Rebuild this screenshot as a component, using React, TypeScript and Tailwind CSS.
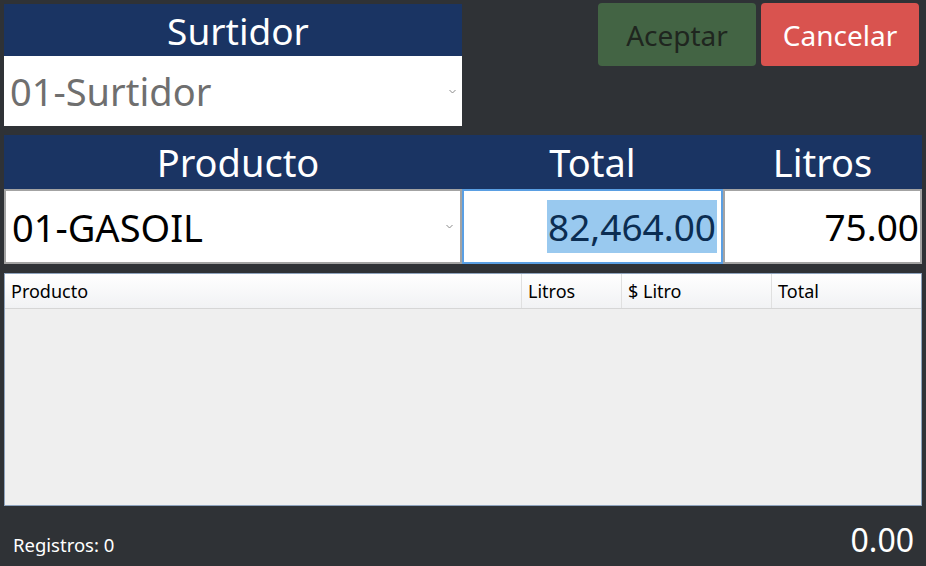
import React from "react";

const Chevron = () => (
  <svg width="7" height="5" viewBox="0 0 7 5" className="shrink-0">
    <path d="M0.5 1 L3.5 4 L6.5 1" fill="none" stroke="#8a8a8a" strokeWidth="1" />
  </svg>
);

export default function App() {
  const font = { fontFamily: '"Noto Sans", "Open Sans", sans-serif' };
  return (
    <div
      className="w-[926px] h-[566px] bg-[#2f3236] overflow-hidden flex flex-col px-1 pt-1"
      style={font}
    >
      {/* Top row */}
      <div className="flex items-start">
        <div className="w-[458px] flex flex-col">
          <div className="h-[52px] bg-[#1a3463] text-white text-[37px] leading-none flex items-center justify-center pl-[10px]">
            Surtidor
          </div>
          <div className="h-[70px] bg-white flex items-center justify-between pl-[6px] pr-[6px]">
            <span className="text-[38px] leading-none text-[#6f6f6f]">01-Surtidor</span>
            <Chevron />
          </div>
        </div>
        <div className="ml-auto mr-[3px] -mt-px flex gap-[5px]">
          <button className="w-[158px] h-[63px] rounded-[4px] bg-[#436444] text-[#1f261f] text-[28px] leading-none flex items-center justify-center">
            Aceptar
          </button>
          <button className="w-[158px] h-[63px] rounded-[4px] bg-[#d9534f] text-white text-[28px] leading-none flex items-center justify-center">
            Cancelar
          </button>
        </div>
      </div>

      {/* Product header */}
      <div className="mt-[9px] w-[918px] h-[54px] bg-[#1a3463] text-white text-[38px] leading-none grid grid-cols-[458px_261px_199px]">
        <div className="flex items-center justify-center pl-[10px]">Producto</div>
        <div className="flex items-center justify-center">Total</div>
        <div className="flex items-center justify-center">Litros</div>
      </div>

      {/* Inputs */}
      <div className="w-[918px] h-[75px] grid grid-cols-[458px_261px_199px]">
        <div className="border-2 border-[#a3a3a3] bg-white flex items-center justify-between pl-[6px] pr-[7px]">
          <span className="text-[38px] leading-none text-black">01-GASOIL</span>
          <Chevron />
        </div>
        <div className="border-2 border-[#5a9fe3] bg-white flex items-center justify-end pr-[4px]">
          <span className="text-[37px] leading-[53px] text-[#0b2d52] bg-[#99c9ef] px-[1px]">82,464.00</span>
        </div>
        <div className="border-2 border-[#a3a3a3] bg-white flex items-center justify-end pr-[1px]">
          <span className="text-[37px] leading-none text-black">75.00</span>
        </div>
      </div>

      {/* Table */}
      <div className="mt-[9px] w-[918px] h-[233px] border border-[#8ea3bd] bg-[#efefef] flex flex-col">
        <div className="h-[35px] bg-gradient-to-b from-white to-[#f1f2f4] border-b border-[#d6d6d6] grid grid-cols-[516px_100px_150px_1fr] text-[18px] text-black leading-none">
          <div className="flex items-center pl-[6px]">Producto</div>
          <div className="flex items-center pl-[6px] border-l border-[#e0e0e0]">Litros</div>
          <div className="flex items-center pl-[6px] border-l border-[#e0e0e0]">$ Litro</div>
          <div className="flex items-center pl-[6px] border-l border-[#e0e0e0]">Total</div>
        </div>
        <div className="flex-1" />
      </div>

      {/* Footer */}
      <div className="flex-1 flex items-end justify-between pb-[10px] pl-[9px] pr-[8px] text-white">
        <span className="text-[18.5px] leading-none mb-[2px]">Registros: 0</span>
        <span className="text-[32px] leading-none">0.00</span>
      </div>
    </div>
  );
}
